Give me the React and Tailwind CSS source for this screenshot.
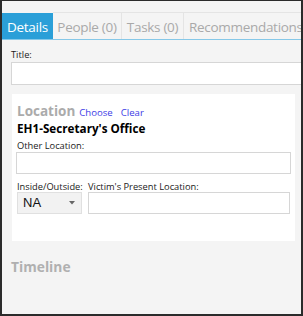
import React from "react";

export default function App() {
  const font = { fontFamily: '"Open Sans", "Noto Sans", sans-serif' };
  return (
    <div
      className="w-[303px] h-[316px] overflow-hidden bg-[#f4f4f4] border-l-2 border-r-2 border-b-2 border-t border-[#2b2b2b] flex flex-col"
      style={font}
    >
      {/* Tabs */}
      <div className="mt-[11px] flex h-[28px] border-b border-[#86c8e8] shrink-0">
        <div className="w-[51px] mt-[1px] h-[26px] bg-[#2a9fd8] text-white text-[13.5px] tracking-[-0.3px] pt-[2px] flex items-center justify-center shrink-0">
          Details
        </div>
        <div className="w-[69px] h-[27px] border-t border-r border-[#e4e4e4] text-[#a9a9a9] text-[13.5px] tracking-[-0.3px] pt-[2px] flex items-center justify-center shrink-0 whitespace-nowrap">
          People (0)
        </div>
        <div className="w-[62px] h-[27px] border-t border-r border-[#e4e4e4] text-[#a9a9a9] text-[13.5px] tracking-[-0.3px] pt-[2px] flex items-center justify-center shrink-0 whitespace-nowrap">
          Tasks (0)
        </div>
        <div className="h-[27px] border-t border-[#e4e4e4] text-[#a9a9a9] text-[13.5px] tracking-[-0.3px] pt-[2px] flex items-center pl-[5px] whitespace-nowrap shrink-0">
          Recommendations
        </div>
      </div>

      {/* Title */}
      <div className="pl-[9px] pt-[9px] shrink-0">
        <div className="text-[9.3px] leading-[12px] text-[#1a1a1a]">Title:</div>
        <div className="w-[320px] h-[23px] bg-white border border-[#d6d6d6] mt-[1px]"></div>
      </div>

      {/* Location card */}
      <div className="ml-[10px] mr-[6px] mt-[9px] h-[147px] shrink-0 bg-white pl-[4px] pr-[4px] pt-[9px]">
        <div className="flex items-baseline h-[16px] pl-[1px]">
          <span className="text-[13.5px] leading-[16px] font-bold text-[#ababab]">Location</span>
          <span className="ml-[4px] text-[9.6px] leading-[16px] text-[#3d3de6]">Choose</span>
          <span className="ml-[8px] text-[9.6px] leading-[16px] text-[#3d3de6]">Clear</span>
        </div>
        <div className="mt-[2px] pl-[1px] text-[11.7px] leading-[15px] font-bold text-black">
          EH1-Secretary's Office
        </div>
        <div className="mt-[4px] pl-[1px] text-[9.3px] leading-[12px] text-[#1a1a1a]">Other Location:</div>
        <div className="h-[22px] w-[275px] bg-white border border-[#d6d6d6]"></div>
        <div className="flex mt-[7px]">
          <div className="flex flex-col ml-[1px] w-[71px]">
            <div className="text-[9.3px] leading-[11px] text-[#1a1a1a] whitespace-nowrap">Inside/Outside:</div>
            <div className="w-[65px] h-[22px] bg-[#f2f2f2] border border-[#e0e0e0] flex items-center justify-between pl-[5px] pr-[6px]">
              <span className="text-[13px] leading-[20px] text-[#111]" style={{ fontFamily: '"Liberation Sans", Arial, sans-serif' }}>NA</span>
              <svg width="6" height="4" viewBox="0 0 6 4">
                <path d="M0 0 L6 0 L3 3.5 Z" fill="#666" />
              </svg>
            </div>
          </div>
          <div className="flex flex-col">
            <div className="text-[9.3px] leading-[11px] text-[#1a1a1a] whitespace-nowrap">Victim's Present Location:</div>
            <div className="w-[202px] h-[22px] bg-white border border-[#d6d6d6]"></div>
          </div>
        </div>
      </div>

      {/* Timeline */}
      <div className="pl-[9px] mt-[17px] text-[13.8px] leading-[18px] font-bold text-[#b0b0b0]">Timeline</div>
    </div>
  );
}
